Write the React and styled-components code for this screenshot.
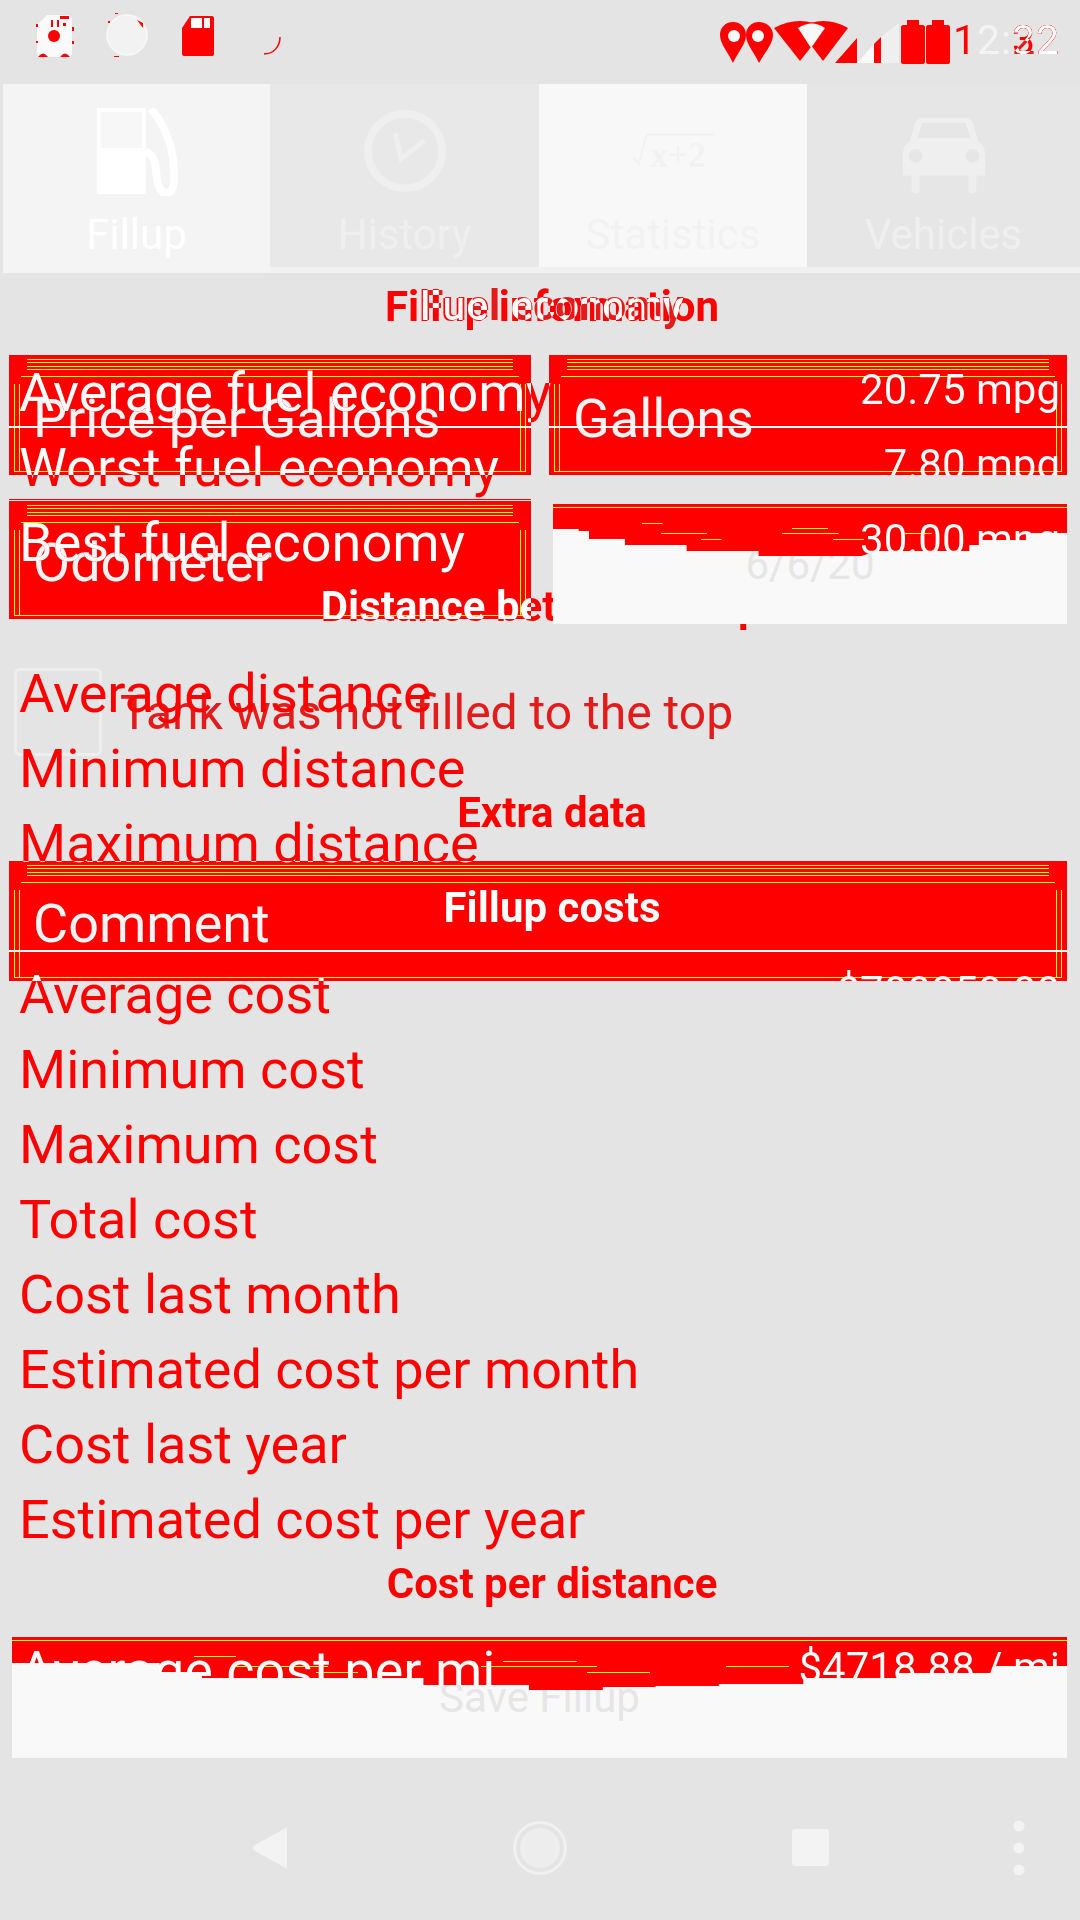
// fillup screen with the statistics tab bleeding through it
import styled, { createGlobalStyle, css } from "styled-components";

const GlobalStyle = createGlobalStyle`
  html, body {
    margin: 0;
    padding: 0;
    background: #e4e4e4;
  }
  body {
    font-family: Roboto, "Liberation Sans", sans-serif;
  }
`;

const fieldRects = `
  linear-gradient(#fff, #fff) 9px 355px / 522px 120px no-repeat,
  linear-gradient(#fff, #fff) 549px 355px / 518px 120px no-repeat,
  linear-gradient(#fff, #fff) 9px 501px / 522px 118px no-repeat,
  linear-gradient(#fff, #fff) 553px 504px / 514px 120px no-repeat,
  linear-gradient(#fff, #fff) 9px 861px / 1057px 120px no-repeat,
  linear-gradient(#fff, #fff) 12px 1637px / 1055px 121px no-repeat
`;

const clippedText = css`
  background-attachment: fixed;
  -webkit-background-clip: text;
  background-clip: text;
  color: transparent;
`;

const Page = styled.div`
  position: relative;
  width: 1080px;
  height: 1920px;
  display: flex;
  flex-direction: column;
  overflow: hidden;
`;

const StatusBar = styled.div`
  height: 84px;
  display: flex;
  align-items: center;
  justify-content: space-between;
  padding-left: 30px;
  box-sizing: border-box;
`;

const StatusLeft = styled.div`
  display: flex;
  gap: 24px;
`;

const StatusRight = styled.div`
  display: flex;
  align-items: center;
  width: 362px;
`;

const StatusTime = styled.div`
  position: relative;
  font-size: 41px;
  line-height: 50px;
  letter-spacing: 1px;
  color: #f4f4f4;
  margin: -4px 0 0 3px;
  span {
    color: #ff0000;
  }
`;

const GhostDigits = styled.i`
  position: absolute;
  right: 0;
  top: 0;
  font-style: normal;
  color: #00ffff;
  mix-blend-mode: difference;
`;

const TabBar = styled.div`
  display: grid;
  grid-template-columns: 267px 269px 268px 273px;
  padding-left: 3px;
  height: 189px;
  align-items: start;
`;

const Tab = styled.div`
  height: ${(p) => (p.$active ? 189 : 183)}px;
  box-sizing: border-box;
  background: ${(p) => p.$bg};
  color: ${(p) => p.$fg};
  display: flex;
  flex-direction: column;
  align-items: center;
  padding-top: 24px;
  font-size: 42px;
  box-shadow: 0 ${(p) => (p.$active ? 0 : 6)}px 0 #f1f1f1;
  svg {
    display: block;
    height: 88px;
  }
`;

const TabLabel = styled.div`
  margin-top: 15px;
  line-height: 48px;
`;

const Content = styled.div`
  position: relative;
  flex: 1;
  display: flex;
  flex-direction: column;
  padding: 7px 13px 0 9px;
  min-height: 0;
`;

const Heading = styled.div`
  height: 76px;
  line-height: 54px;
  padding-left: 28px;
  text-align: center;
  font-size: 42px;
  font-weight: 700;
  color: #ff0000;
`;

const FormTitle = styled(Heading)`
  height: 75px;
`;

const ExtraHeading = styled(Heading)`
  margin-top: 30px;
  height: 75px;
`;

const FieldGrid = styled.div`
  display: grid;
  grid-template-columns: 522px 518px;
  column-gap: 18px;
  row-gap: 26px;
`;

const Field = styled.div`
  position: relative;
  height: ${(p) => p.$height || 120}px;
  box-sizing: border-box;
  padding: ${(p) => p.$pad}px 0 0 24px;
  font-size: 54px;
  line-height: 56px;
  color: #f4f4f4;
  background:
    linear-gradient(#ff0, #ff0) 18px 4px / calc(100% - 36px) 1px no-repeat,
    linear-gradient(#ff0, #ff0) 18px 7px / calc(100% - 36px) 1px no-repeat,
    linear-gradient(#ff0, #ff0) 18px 11px / calc(100% - 36px) 1px no-repeat,
    linear-gradient(#ff0, #ff0) 18px 14px / calc(100% - 36px) 1px no-repeat,
    linear-gradient(#ff0, #ff0) 12px 21px / calc(100% - 24px) 1px no-repeat,
    linear-gradient(#ff0, #ff0) 5px 29px / 1px calc(100% - 32px) no-repeat,
    linear-gradient(#ff0, #ff0) 10px 29px / 1px calc(100% - 32px) no-repeat,
    linear-gradient(#ff0, #ff0) calc(100% - 5px) 29px / 1px calc(100% - 32px) no-repeat,
    linear-gradient(#ff0, #ff0) calc(100% - 10px) 29px / 1px calc(100% - 32px) no-repeat,
    linear-gradient(#ff0, #ff0) 5px calc(100% - 3px) / calc(100% - 10px) 1px no-repeat,
    #ff0000;
  box-shadow: ${(p) => (p.$edge ? "0 -1px 0 #e4e4e4, 0 -2px 0 #ff0000" : "none")};
`;

const FieldLine = styled.div`
  position: absolute;
  left: 0;
  right: 0;
  top: ${(p) => p.$top}px;
  height: 2px;
  background: #fff;
`;

// field covered by a torn white sheet, the red shows only above the tear
const TornField = styled.div`
  position: relative;
  height: ${(p) => p.$height}px;
  margin: ${(p) => p.$margin || 0};
  background:
    linear-gradient(#ff0, #ff0) 0 3px / 100% 1px no-repeat,
    linear-gradient(#ff0, #ff0) 18% 19px / 4% 1px no-repeat,
    linear-gradient(#ff0, #ff0) 50% 24px / 7% 1px no-repeat,
    linear-gradient(#ff0, #ff0) 23% 29px / 9% 1px no-repeat,
    linear-gradient(#ff0, #ff0) 50% 29px / 11% 1px no-repeat,
    linear-gradient(#ff0, #ff0) 72% 29px / 6% 1px no-repeat,
    linear-gradient(#ff0, #ff0) 30% 35px / 4% 1px no-repeat,
    linear-gradient(#ff0, #ff0) 58% 35px / 6% 1px no-repeat,
    #ff0000;
`;

const TornSheet = styled.div`
  position: absolute;
  inset: 0;
  z-index: 2;
  background: #f9f9f9;
  clip-path: polygon(${(p) => p.$tear});
  display: flex;
  align-items: flex-end;
  justify-content: center;
  color: #e6e6e6;
  font-size: 42px;
  line-height: 56px;
  padding-bottom: ${(p) => p.$pad}px;
  box-sizing: border-box;
`;

const CheckRow = styled.div`
  display: flex;
  align-items: center;
  gap: 18px;
  margin: 44px 0 0 5px;
  height: 88px;
`;

const CheckBox = styled.div`
  width: 88px;
  height: 88px;
  box-sizing: border-box;
  border: 3px solid #eeeeee;
  border-radius: 6px;
`;

const CheckLabel = styled.div`
  font-size: 48px;
  color: #00ffff;
  mix-blend-mode: difference;
`;

const StatsLayer = styled.div`
  position: absolute;
  left: 0;
  right: 0;
  top: 279px;
  padding: 0 20px;
`;

const StatsHeading = styled.div`
  height: 76px;
  line-height: 54px;
  padding-left: 24px;
  text-align: center;
  font-size: 42px;
  font-weight: 700;
  white-space: nowrap;
  ${(p) =>
    p.$blend
      ? css`
          color: #00ffff;
          mix-blend-mode: difference;
        `
      : css`
          span {
            background: ${fieldRects}, #ff0000;
            ${clippedText}
          }
        `}
`;

const StatRow = styled.div`
  height: 75px;
  display: flex;
  align-items: center;
  justify-content: space-between;
  white-space: nowrap;
`;

const StatLabel = styled.span`
  font-size: 54px;
  line-height: 75px;
  margin-left: -1px;
  background: ${fieldRects}, #ff0000;
  ${clippedText}
`;

const StatValue = styled.span`
  font-size: 42px;
  line-height: 65px;
  margin-bottom: 6px;
  background: ${fieldRects};
  ${clippedText}
`;

const SaveSlot = styled.div`
  margin: 0 13px 162px 12px;
`;

const NavBar = styled.div`
  position: absolute;
  left: 0;
  right: 0;
  bottom: 0;
  height: 144px;
  display: flex;
  justify-content: center;
  svg {
    display: block;
  }
`;

const PumpIcon = () => (
  <svg viewBox="0 0 90 90" width="90" fill="none">
    <path d="M4 0h50v88H4z M8 4v37h42V4z" fill="#fff" fillRule="evenodd" />
    <path d="M8 4h42v37H8z" fill="#f7f7f7" />
    <path
      d="M59 1c13 14 21 34 23 53 1 14 3 33-7 33-9 0-10-16-11-28-1-8-4-12-10-14"
      stroke="#fff"
      strokeWidth="8"
    />
  </svg>
);

const ClockIcon = () => (
  <svg viewBox="0 0 90 90" width="90" fill="none" stroke="#efefef">
    <circle cx="45" cy="44" r="38" strokeWidth="8" />
    <path d="M35 26l6 26 24-19" strokeWidth="5" />
  </svg>
);

const MathIcon = () => (
  <svg viewBox="0 0 90 90" width="90">
    <path d="M4 50l6 8 8-31h70" fill="none" stroke="#f2f2f2" strokeWidth="2" />
    <text x="22" y="60" fontFamily="Liberation Serif" fontWeight="700" fontSize="36" fill="#f2f2f2">
      x+2
    </text>
  </svg>
);

const CarIcon = () => (
  <svg viewBox="0 0 90 90" width="90">
    <path
      d="M24 0h42c5 0 8 3 9 7l5 17c5 3 7 8 7 14v21H78v16c0 3-8 3-8 0V59H20v16c0 3-8 3-8 0V59H3V38c0-6 2-11 7-14l5-17c1-4 4-7 9-7zM23 5l-5 16h54L67 5zM16 32a7 7 0 1 0 .1 0zM74 32a7 7 0 1 0 .1 0z"
      fill="#efefef"
      fillRule="evenodd"
      transform="translate(0 10)"
    />
  </svg>
);

const SystemIcons = () => (
  <svg viewBox="718 10 232 52" width="232" height="52">
    <path d="M733 16c8 0 13 6 13 13 0 9-8 17-13 28-5-11-13-19-13-28 0-7 5-13 13-13z" fill="#f00" />
    <path d="M759 16c8 0 14 6 14 13 0 9-8 17-14 28-5-11-13-19-13-28 0-7 5-13 13-13z" fill="#f00" />
    <circle cx="734" cy="30" r="6" fill="#f8f8f8" />
    <circle cx="758" cy="30" r="6" fill="#f8f8f8" />
    <path d="M774 22Q800 8 826 22L800 55z" fill="#f00" />
    <path d="M798 22Q824 8 848 22L823 55z" fill="#f00" />
    <path d="M798 22Q812 13 825 22L811 42z" fill="#f8f8f8" />
    <path d="M835 57l22-25v25z" fill="#f00" />
    <path d="M857 57l17-19v19z" fill="#fafafa" />
    <path d="M874 38l7-7v26h-7z" fill="#f00" />
    <path d="M881 57V31l18-14v40z" fill="#efefef" />
    <path d="M903 19h4v-5h12v5h4c1 0 2 1 2 2v35c0 1-1 2-2 2h-20c-1 0-2-1-2-2V21c0-1 1-2 2-2z" fill="#f00" />
    <path d="M928 19h4v-5h12v5h4c1 0 2 1 2 2v35c0 1-1 2-2 2h-20c-1 0-2-1-2-2V21c0-1 1-2 2-2z" fill="#f00" />
  </svg>
);

const App = () => (
  <Page>
    <GlobalStyle />
    <StatusBar>
      <StatusLeft>
        <svg width="48" height="60" viewBox="0 0 48 60">
          <path d="M17 3h20c3 0 5 2 5 5v33c0 3-2 4-5 4H12c-3 0-5-1-5-4V13z" fill="#fafafa" />
          <circle cx="24" cy="24" r="6" fill="#f00" />
          <path d="M21 8h2v7h-2zM27 8h2v7h-2zM30 4h9v3h-9zM33 11h3v3h-3zM6 12h2v3H6zM6 29h2v2H6zM42 15h2v4h-2zM42 29h2v3h-2z" fill="#f00" />
          <path d="M8 45q5-7 10 0zM30 45q5-7 10 0z" fill="#f00" />
        </svg>
        <svg width="48" height="60" viewBox="0 0 48 60">
          <circle cx="25" cy="23" r="20" fill="#f2f2f2" stroke="#f8f8f8" strokeWidth="1.5" />
          <path d="M35 8l6 3v5z" fill="#f00" />
          <path d="M13 1h3v1h-3zM6 9h2v2H6zM12 44h5v1h-5z" fill="#f00" />
        </svg>
        <svg width="48" height="60" viewBox="0 0 48 60">
          <path d="M16 4h22c1 0 2 1 2 2v36c0 1-1 2-2 2H10c-1 0-2-1-2-2V16z" fill="#f00" />
          <path d="M17 6h11v10H17zM30 6h6v10h-6z" fill="#fafafa" />
        </svg>
        <svg width="48" height="60" viewBox="0 0 48 60">
          <path d="M18 42c10 0 16-8 16-17" fill="none" stroke="#f00" strokeWidth="1.5" />
        </svg>
      </StatusLeft>
      <StatusRight>
        <SystemIcons />
        <StatusTime>
          <span>1</span>2:<span>32</span>
          <GhostDigits>22</GhostDigits>
        </StatusTime>
      </StatusRight>
    </StatusBar>

    <TabBar>
      <Tab $active $bg="#f4f4f4" $fg="#ffffff">
        <PumpIcon />
        <TabLabel>Fillup</TabLabel>
      </Tab>
      <Tab $bg="#e8e8e8" $fg="#efefef">
        <ClockIcon />
        <TabLabel>History</TabLabel>
      </Tab>
      <Tab $bg="#f8f8f8" $fg="#f2f2f2">
        <MathIcon />
        <TabLabel>Statistics</TabLabel>
      </Tab>
      <Tab $bg="#e6e6e6" $fg="#efefef">
        <CarIcon />
        <TabLabel>Vehicles</TabLabel>
      </Tab>
    </TabBar>

    <Content>
      <FormTitle>Fillup information</FormTitle>
      <FieldGrid>
        <Field $pad={36}>
          Price per Gallons
          <FieldLine $top={71} />
        </Field>
        <Field $pad={36}>
          Gallons
          <FieldLine $top={71} />
        </Field>
        <Field $height={118} $edge $pad={34}>
          Odometer
        </Field>
        <TornField $height={120} $margin="3px 0 0 4px">
          <TornSheet
            $pad={31}
            $tear="0 25px, 5% 25px, 5% 27px, 7% 27px, 7% 35px, 14% 35px, 14% 41px, 26% 41px, 26% 47px, 40% 47px, 40% 52px, 60% 52px, 63% 47px, 81% 47px, 81% 41px, 83% 41px, 83% 36px, 92% 36px, 92% 29px, 100% 29px, 100% 100%, 0 100%"
          >
            6/6/20
          </TornSheet>
        </TornField>
      </FieldGrid>

      <CheckRow>
        <CheckBox />
        <CheckLabel>Tank was not filled to the top</CheckLabel>
      </CheckRow>

      <ExtraHeading>Extra data</ExtraHeading>

      <Field $pad={35}>
        Comment
        <FieldLine $top={89} />
      </Field>
    </Content>

    <SaveSlot>
      <TornField $height={121}>
        <TornSheet
          $pad={32}
          $tear="0 26px, 14% 26px, 14% 35px, 18% 35px, 18% 41px, 39% 41px, 39% 48px, 49% 48px, 49% 53px, 56% 53px, 56% 50px, 61% 50px, 61% 49px, 67% 49px, 67% 47px, 75% 47px, 75% 41px, 84% 41px, 84% 36px, 93% 36px, 93% 29px, 100% 29px, 100% 100%, 0 100%"
        >
          Save Fillup
        </TornSheet>
      </TornField>
    </SaveSlot>

    <StatsLayer>
      <StatsHeading $blend>Fuel economy</StatsHeading>
      <StatRow>
        <StatLabel>Average fuel economy</StatLabel>
        <StatValue>20.75 mpg</StatValue>
      </StatRow>
      <StatRow>
        <StatLabel>Worst fuel economy</StatLabel>
        <StatValue>7.80 mpg</StatValue>
      </StatRow>
      <StatRow>
        <StatLabel>Best fuel economy</StatLabel>
        <StatValue>30.00 mpg</StatValue>
      </StatRow>
      <StatsHeading>
        <span>Distance between fillups</span>
      </StatsHeading>
      <StatRow>
        <StatLabel>Average distance</StatLabel>
      </StatRow>
      <StatRow>
        <StatLabel>Minimum distance</StatLabel>
      </StatRow>
      <StatRow>
        <StatLabel>Maximum distance</StatLabel>
      </StatRow>
      <StatsHeading>
        <span>Fillup costs</span>
      </StatsHeading>
      <StatRow>
        <StatLabel>Average cost</StatLabel>
        <StatValue>$700050.00</StatValue>
      </StatRow>
      <StatRow>
        <StatLabel>Minimum cost</StatLabel>
      </StatRow>
      <StatRow>
        <StatLabel>Maximum cost</StatLabel>
      </StatRow>
      <StatRow>
        <StatLabel>Total cost</StatLabel>
      </StatRow>
      <StatRow>
        <StatLabel>Cost last month</StatLabel>
      </StatRow>
      <StatRow>
        <StatLabel>Estimated cost per month</StatLabel>
      </StatRow>
      <StatRow>
        <StatLabel>Cost last year</StatLabel>
      </StatRow>
      <StatRow>
        <StatLabel>Estimated cost per year</StatLabel>
      </StatRow>
      <StatsHeading>
        <span>Cost per distance</span>
      </StatsHeading>
      <StatRow>
        <StatLabel>Average cost per mi</StatLabel>
        <StatValue>$4718.88 / mi</StatValue>
      </StatRow>
    </StatsLayer>

    <NavBar>
      <svg width="1080" height="144" viewBox="0 1776 1080 144">
        <path d="M284 1829c2-2 3-1 3 2v34c0 3-1 4-3 2l-29-16c-3-2-3-4 0-6z" fill="#f3f3f3" />
        <circle cx="540" cy="1848" r="25.5" fill="none" stroke="#f1f1f1" strokeWidth="3" />
        <circle cx="540" cy="1848" r="20" fill="#ededed" />
        <rect x="792" y="1829" width="37" height="37" rx="3" fill="#f3f3f3" />
        <circle cx="1019" cy="1826" r="5.5" fill="#f3f3f3" />
        <circle cx="1019" cy="1848" r="5.5" fill="#f3f3f3" />
        <circle cx="1019" cy="1870" r="5.5" fill="#f3f3f3" />
      </svg>
    </NavBar>
  </Page>
);

export default App;
